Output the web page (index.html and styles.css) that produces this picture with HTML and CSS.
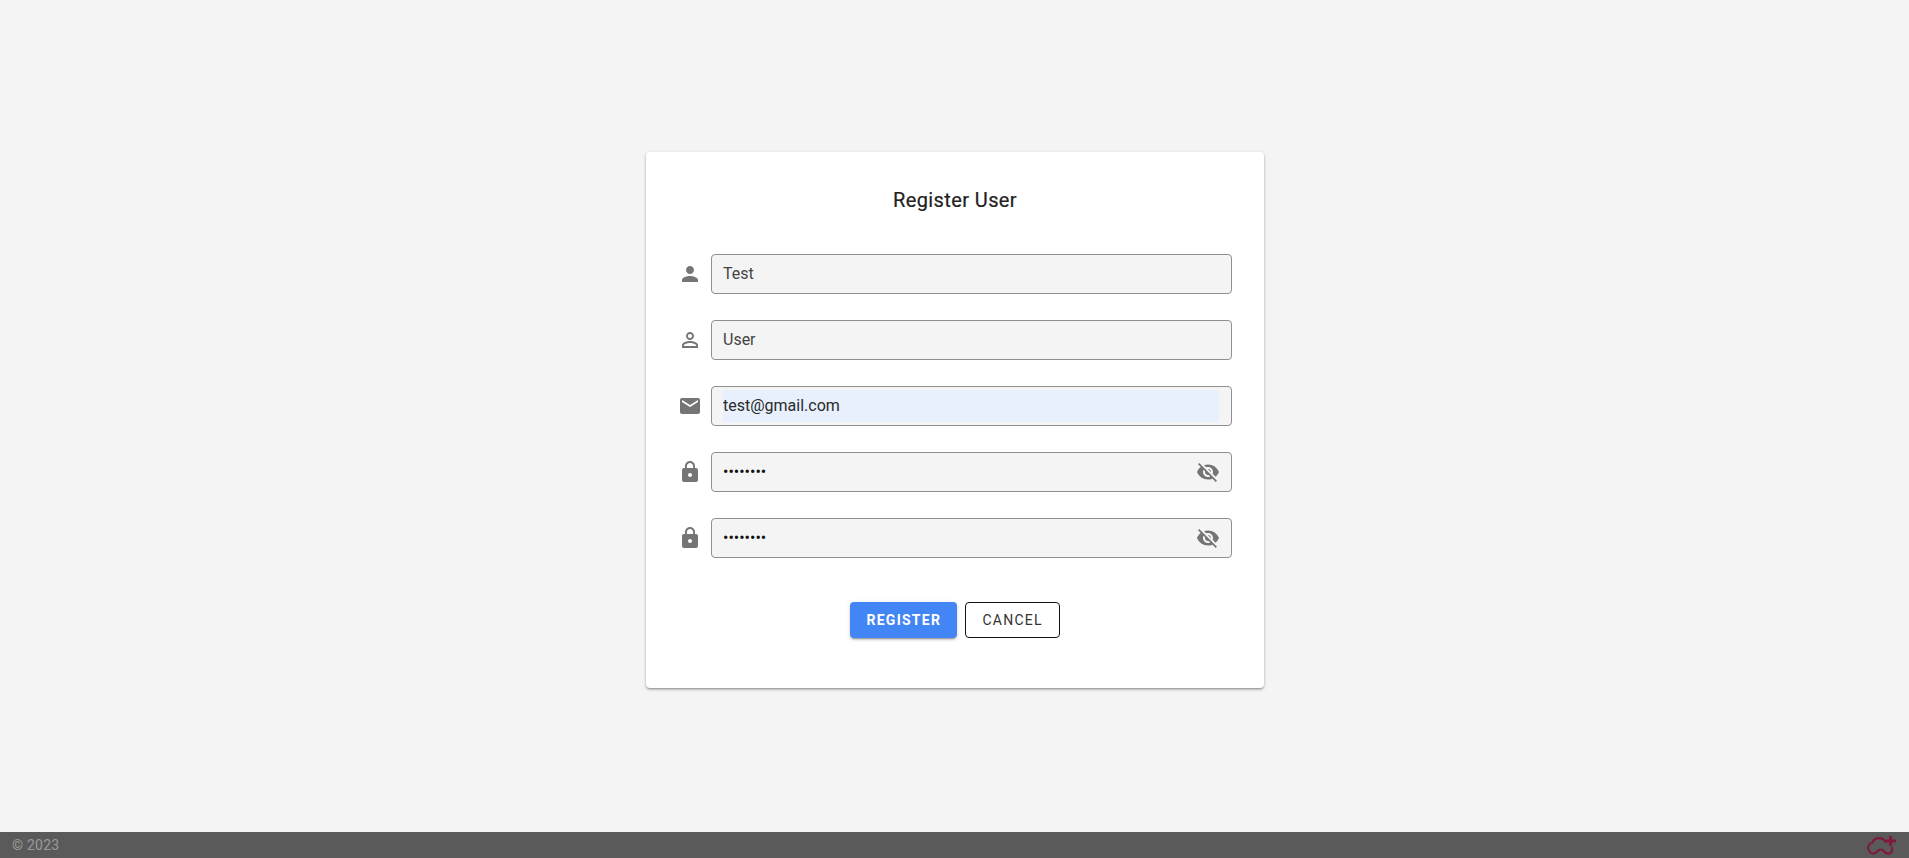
FILE: index.html
```html
<!DOCTYPE html>
<html lang="en">
<head>
<meta charset="utf-8">
<title>Register User</title>
<link rel="stylesheet" href="styles.css">
</head>
<body>
<main class="page">
  <form class="card">
    <h1 class="title">Register User</h1>
    <div class="fields">
      <div class="row">
        <svg class="icon" viewBox="0 0 24 24"><path d="M12 12c2.21 0 4-1.79 4-4s-1.79-4-4-4-4 1.79-4 4 1.79 4 4 4zm0 2c-2.67 0-8 1.34-8 4v2h16v-2c0-2.66-5.33-4-8-4z"/></svg>
        <div class="box"><input class="input" type="text" value="Test"></div>
      </div>
      <div class="row">
        <svg class="icon" viewBox="0 0 24 24"><path d="M12 5.9c1.16 0 2.1.94 2.1 2.1s-.94 2.1-2.1 2.1S9.9 9.16 9.9 8s.94-2.1 2.1-2.1m0 9c2.97 0 6.1 1.46 6.1 2.1v1.1H5.9V17c0-.64 3.13-2.1 6.1-2.1M12 4C9.79 4 8 5.79 8 8s1.79 4 4 4 4-1.79 4-4-1.79-4-4-4zm0 9c-2.67 0-8 1.34-8 4v3h16v-3c0-2.66-5.33-4-8-4z"/></svg>
        <div class="box"><input class="input" type="text" value="User"></div>
      </div>
      <div class="row">
        <svg class="icon" viewBox="0 0 24 24"><path d="M20 4H4c-1.1 0-1.99.9-1.99 2L2 18c0 1.1.9 2 2 2h16c1.1 0 2-.9 2-2V6c0-1.1-.9-2-2-2zm0 4l-8 5-8-5V6l8 5 8-5v2z"/></svg>
        <div class="box box-filled"><input class="input input-filled" type="text" value="test@gmail.com"></div>
      </div>
      <div class="row">
        <svg class="icon" viewBox="0 0 24 24"><path d="M18 8h-1V6c0-2.76-2.24-5-5-5S7 3.24 7 6v2H6c-1.1 0-2 .9-2 2v10c0 1.1.9 2 2 2h12c1.1 0 2-.9 2-2V10c0-1.1-.9-2-2-2zm-6 9c-1.1 0-2-.9-2-2s.9-2 2-2 2 .9 2 2-.9 2-2 2zm3.1-9H8.9V6c0-1.71 1.39-3.1 3.1-3.1 1.71 0 3.1 1.39 3.1 3.1v2z"/></svg>
        <div class="box"><input class="input input-secret" type="password" value="password">
          <svg class="icon eye" viewBox="0 0 24 24"><path d="M12 7c2.76 0 5 2.24 5 5 0 .65-.13 1.26-.36 1.83l2.92 2.92c1.51-1.26 2.7-2.89 3.43-4.75-1.73-4.39-6-7.5-11-7.5-1.4 0-2.74.25-3.98.7l2.16 2.16C10.74 7.13 11.35 7 12 7zM2 4.27l2.28 2.28.46.46C3.08 8.3 1.78 10.02 1 12c1.73 4.39 6 7.5 11 7.5 1.55 0 3.03-.3 4.38-.84l.42.42L19.73 22 21 20.73 3.27 3 2 4.27zM7.53 9.8l1.55 1.55c-.05.21-.08.43-.08.65 0 1.66 1.34 3 3 3 .22 0 .44-.03.65-.08l1.55 1.55c-.67.33-1.41.53-2.2.53-2.76 0-5-2.24-5-5 0-.79.2-1.53.53-2.2zm4.31-.78l3.15 3.15.02-.16c0-1.66-1.34-3-3-3l-.17.01z"/></svg>
        </div>
      </div>
      <div class="row">
        <svg class="icon" viewBox="0 0 24 24"><path d="M18 8h-1V6c0-2.76-2.24-5-5-5S7 3.24 7 6v2H6c-1.1 0-2 .9-2 2v10c0 1.1.9 2 2 2h12c1.1 0 2-.9 2-2V10c0-1.1-.9-2-2-2zm-6 9c-1.1 0-2-.9-2-2s.9-2 2-2 2 .9 2 2-.9 2-2 2zm3.1-9H8.9V6c0-1.71 1.39-3.1 3.1-3.1 1.71 0 3.1 1.39 3.1 3.1v2z"/></svg>
        <div class="box"><input class="input input-secret" type="password" value="password">
          <svg class="icon eye" viewBox="0 0 24 24"><path d="M12 7c2.76 0 5 2.24 5 5 0 .65-.13 1.26-.36 1.83l2.92 2.92c1.51-1.26 2.7-2.89 3.43-4.75-1.73-4.39-6-7.5-11-7.5-1.4 0-2.74.25-3.98.7l2.16 2.16C10.74 7.13 11.35 7 12 7zM2 4.27l2.28 2.28.46.46C3.08 8.3 1.78 10.02 1 12c1.73 4.39 6 7.5 11 7.5 1.55 0 3.03-.3 4.38-.84l.42.42L19.73 22 21 20.73 3.27 3 2 4.27zM7.53 9.8l1.55 1.55c-.05.21-.08.43-.08.65 0 1.66 1.34 3 3 3 .22 0 .44-.03.65-.08l1.55 1.55c-.67.33-1.41.53-2.2.53-2.76 0-5-2.24-5-5 0-.79.2-1.53.53-2.2zm4.31-.78l3.15 3.15.02-.16c0-1.66-1.34-3-3-3l-.17.01z"/></svg>
        </div>
      </div>
    </div>
    <div class="actions">
      <button class="btn btn-primary" type="button">REGISTER</button>
      <button class="btn btn-outline" type="button">CANCEL</button>
    </div>
  </form>
</main>
<footer class="footer">
  <span class="copy">© 2023</span>
  <svg class="logo" viewBox="0 0 30 20"><path class="logo-line" d="M6.500 18.700A5.700 5.700 0 0 1 5.500 7.500A7 7 0 0 1 18.500 7.500M6.500 18.700C10 18.700 10.500 14.500 14 14.500C17.500 14.500 17 18.700 21 18.700C24.500 18.700 26 15.500 24.500 12"/><path class="logo-plus" d="M23.500 1v10M18.500 6h10.500"/></svg>
</footer>
</body>
</html>
```
FILE: styles.css
```css
* { box-sizing: border-box; }
html, body { height: 100%; }
body {
  margin: 0;
  display: flex;
  flex-direction: column;
  background: #f4f4f4;
  font-family: Roboto, "Liberation Sans", sans-serif;
  overflow: hidden;
}
.page {
  flex: 1;
  display: flex;
  justify-content: center;
  align-items: flex-start;
  padding-top: 152px;
}
.card {
  width: 618px;
  height: 536px;
  padding: 32px;
  background: #fff;
  border-radius: 4px;
  box-shadow: 0 2px 3px -1px rgba(0,0,0,.3), 0 1px 2px 0 rgba(0,0,0,.14), 0 1px 4px 0 rgba(0,0,0,.12);
}
.title {
  margin: 0 0 38px;
  height: 32px;
  padding-left: 1px;
  text-align: center;
  font-size: 20px;
  line-height: 32px;
  font-weight: 400;
  letter-spacing: .4px;
  color: #212121;
  -webkit-text-stroke: .2px #212121;
}
.fields { display: flex; flex-direction: column; gap: 26px; }
.row { display: flex; align-items: center; gap: 9px; }
.icon { width: 24px; height: 24px; flex: none; fill: #757575; }
.box {
  flex: 1;
  height: 40px;
  display: flex;
  align-items: center;
  padding: 3px 11px;
  background: #f4f4f4;
  border: 1px solid #8f8f8f;
  border-radius: 4px;
}
.box-filled { padding-right: 12px; }
.input {
  flex: 1;
  min-width: 0;
  height: 100%;
  padding: 0 0 2px .5px;
  border: 0;
  outline: 0;
  background: transparent;
  font-family: inherit;
  font-size: 16px;
  color: #444;
}
.input-filled { background: #e8f0fe; color: #2a2a2a; }
.input-secret { color: #111; }
.eye { margin-right: 0; }
.actions { display: flex; justify-content: center; gap: 8px; margin-top: 44px; }
.btn {
  height: 36px;
  padding: 0 16px;
  border-radius: 4px;
  font-family: inherit;
  font-size: 14px;
  letter-spacing: 1.25px;
  line-height: 34px;
}
.btn-primary {
  width: 107px;
  padding-left: 17px;
  border: 0;
  font-weight: 700;
  color: #fff;
  background: #4285f4;
  box-shadow: 0 3px 1px -2px rgba(0,0,0,.2), 0 2px 2px 0 rgba(0,0,0,.14), 0 1px 5px 0 rgba(0,0,0,.12);
}
.btn-outline {
  width: 95px;
  padding-left: 17px;
  padding-bottom: 1px;
  font-weight: 400;
  color: #333;
  background: #fff;
  border: 1px solid #111;
}
.footer {
  flex: none;
  height: 26px;
  display: flex;
  align-items: center;
  justify-content: space-between;
  padding: 0 12px;
  background: #5a5a5a;
  color: #9a9a9a;
  font-size: 14px;
  letter-spacing: .25px;
}
.logo { width: 30px; height: 20px; }
.logo-line { fill: none; stroke: #7f1a3a; stroke-width: 2.2; }
.logo-plus { fill: none; stroke: #7f1a3a; stroke-width: 3; }
```
